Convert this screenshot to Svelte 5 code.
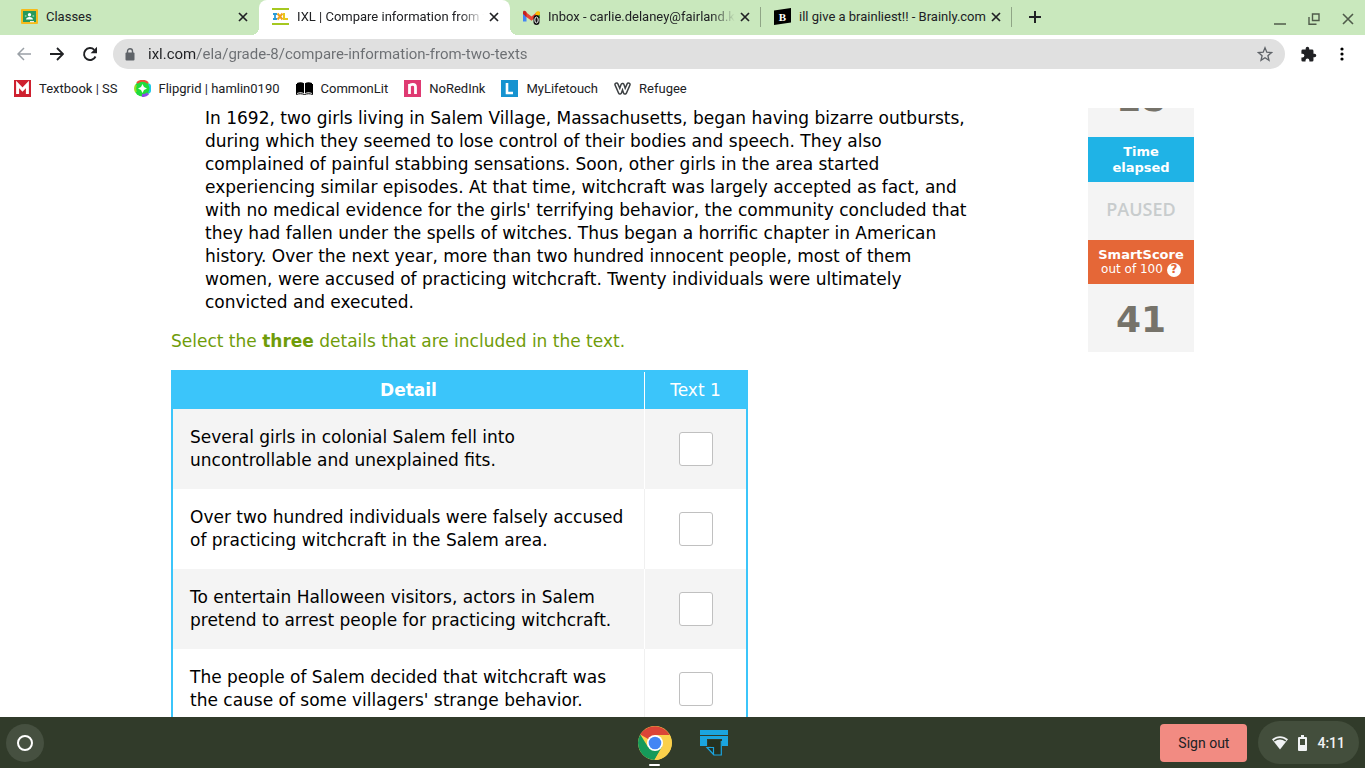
<script lang="ts">
  type Tab = { id: string; title: string; active?: boolean; divider?: boolean; fade?: boolean }

  const tabs: Tab[] = [
    { id: 'classroom', title: 'Classes' },
    { id: 'ixl', title: 'IXL | Compare information from t', active: true, fade: true },
    { id: 'gmail', title: 'Inbox - carlie.delaney@fairland.k', divider: true, fade: true },
    { id: 'brainly', title: 'ill give a brainliest!! - Brainly.com', divider: true }
  ]

  const bookmarks = [
    { id: 'textbook', label: 'Textbook | SS' },
    { id: 'flipgrid', label: 'Flipgrid | hamlin0190' },
    { id: 'commonlit', label: 'CommonLit' },
    { id: 'noredink', label: 'NoRedInk' },
    { id: 'lifetouch', label: 'MyLifetouch' },
    { id: 'refugee', label: 'Refugee' }
  ]

  let url = $state('ixl.com/ela/grade-8/compare-information-from-two-texts')

  let details = $state([
    { text: 'Several girls in colonial Salem fell into uncontrollable and unexplained fits.', checked: false },
    { text: 'Over two hundred individuals were falsely accused of practicing witchcraft in the Salem area.', checked: false },
    { text: 'To entertain Halloween visitors, actors in Salem pretend to arrest people for practicing witchcraft.', checked: false },
    { text: "The people of Salem decided that witchcraft was the cause of some villagers' strange behavior.", checked: false }
  ])
</script>

{#snippet closeIcon()}
  <svg width="10" height="10" viewBox="0 0 10 10"><path d="M1 1l8 8M9 1L1 9" stroke="currentColor" stroke-width="1.7" /></svg>
{/snippet}

{#snippet favicon(id: string)}
  <svg class="favicon" width="17" height="17" viewBox="0 0 17 17" aria-hidden="true">
    {#if id === 'classroom'}
      <rect y="1" width="17" height="15" rx="1" fill="#f6bb1b" />
      <rect x="2" y="3" width="13" height="11" fill="#28995c" />
      <circle cx="8.5" cy="6.7" r="1.7" fill="#fff" />
      <path d="M5 11.5c0-3.4 7-3.4 7 0z" fill="#fff" />
      <circle cx="4.7" cy="8" r="1" fill="#80c9a0" />
      <circle cx="12.3" cy="8" r="1" fill="#80c9a0" />
      <rect x="9" y="13" width="4" height="1.2" fill="#eee" />
    {:else if id === 'ixl'}
      <rect width="17" height="2" fill="#a6c820" />
      <rect y="15" width="17" height="2" fill="#a6c820" />
      <path d="M1 6h4M3 6v5M1 11h4" stroke="#2a9bd8" stroke-width="1.8" />
      <path d="M5.5 5.5l5 6M10.500 5.500l-5 6" stroke="#f2a21c" stroke-width="2" />
      <path d="M12 5v6h4" stroke="#e8c81c" stroke-width="2" fill="none" />
    {:else if id === 'gmail'}
      <path d="M0 3.5v10h3.500V7z" fill="#4285f4" />
      <path d="M12.500 7L17 4v6h-4.500z" fill="#34a853" />
      <path d="M2 3.500l6.500 5 5-4v4.300l-5 4L2 8z" fill="#ea4335" />
      <path d="M12.500 4.800c2-2 4.500-2 4.500.2v1.500l-4.500 3z" fill="#fbbc04" />
      <path d="M0 6V4.500C0 2.500 1.500 2 3.500 4v5z" fill="#c5221f" />
      <rect x="10.500" y="7" width="6" height="10" rx="3" fill="#111" />
      <ellipse cx="13.500" cy="12" rx="1.700" ry="3" fill="none" stroke="#fff" />
    {:else if id === 'brainly'}
      <path d="M0 2.500L17 0v14.500L0 17z" fill="#000" />
      <text x="8.500" y="12.500" text-anchor="middle" class="slab">B</text>
    {:else if id === 'textbook'}
      <rect width="17" height="17" fill="#ce202f" />
      <path d="M3.600 14V4.500L8.500 9.500l4.900-5V14" fill="none" stroke="#fff" stroke-width="3" />
    {:else if id === 'flipgrid'}
      <circle cx="8.500" cy="8.500" r="8" fill="#20dc3b" />
      <path d="M3 3a8 8 0 0 1 11 0" fill="none" stroke="#f05038" stroke-width="2" />
      <path d="M15 4a8 8 0 0 1 0 9" fill="none" stroke="#20c8e8" stroke-width="2" />
      <path d="M8 15.500a8 8 0 0 0 6-2" fill="none" stroke="#8b4be8" stroke-width="3" />
      <path d="M2 12a8 8 0 0 1 0-7" fill="none" stroke="#9ade20" stroke-width="2" />
      <path d="M8.500 4L10 7l3 1.500L10 10l-1.500 3L7 10 4 8.500 7 7z" fill="#fff" />
    {:else if id === 'commonlit'}
      <path d="M1 3c2.500-1 5-1 7 .3v10C6 12 3.500 12 1 13zM16 3c-2.500-1-5-1-7 .3v10c2-1.300 4.500-1.300 7-.3z" fill="#000" />
      <path d="M.5 4v10.500c2.500-1 5-1 8 0 3-1 5.500-1 8 0V4" fill="none" stroke="#000" />
    {:else if id === 'noredink'}
      <rect width="17" height="17" fill="#df3a72" />
      <path d="M5.500 14V4M5.500 6c1-2 6-2.500 6 1v7" fill="none" stroke="#fff" stroke-width="2.800" />
    {:else if id === 'lifetouch'}
      <rect width="17" height="17" fill="#1693d0" />
      <path d="M6 3v10h6" fill="none" stroke="#fff" stroke-width="2.600" />
    {:else if id === 'refugee'}
      <path d="M2.500 4.500L6 12.500 8.500 5 11 12.500 14.500 4.500" fill="none" stroke="#3c4043" stroke-width="4.500" stroke-linejoin="round" stroke-linecap="round" />
      <path d="M2.500 4.500L6 12.500 8.500 5 11 12.500 14.500 4.500" fill="none" stroke="#fff" stroke-width="1.600" stroke-linejoin="round" stroke-linecap="round" />
    {/if}
  </svg>
{/snippet}

<div class="screen">
  <div class="tab-strip">
    {#each tabs as tab (tab.id)}
      <div class="tab" class:active={tab.active} class:divider={tab.divider}>
        {@render favicon(tab.id)}
        <span class="tab-title" class:fade={tab.fade}>{tab.title}</span>
        <button class="tab-close" aria-label="Close tab">{@render closeIcon()}</button>
      </div>
    {/each}
    <button class="new-tab" aria-label="New tab">
      <svg width="14" height="14" viewBox="0 0 14 14"><path d="M7 1v12M1 7h12" stroke="currentColor" stroke-width="2" /></svg>
    </button>
    <div class="window-controls">
      <button aria-label="Minimize"><svg width="12" height="12" viewBox="0 0 12 12"><path d="M0 11h12" stroke="currentColor" stroke-width="1.500" /></svg></button>
      <button aria-label="Restore">
        <svg width="12" height="12" viewBox="0 0 12 12" fill="none" stroke="currentColor" stroke-width="1.400"><path d="M4.500 1h6.500v6.500H4.500zM1 4v7.200h7.500" /></svg>
      </button>
      <button aria-label="Close window"><svg width="12" height="12" viewBox="0 0 12 12"><path d="M1 1l10 10M11 1L1 11" stroke="currentColor" stroke-width="1.600" /></svg></button>
    </div>
  </div>

  <div class="toolbar">
    <button class="nav back" aria-label="Back">
      <svg width="14" height="14" viewBox="0 0 14 14" fill="none" stroke="currentColor" stroke-width="1.500"><path d="M14 7H1.500M7 1L1 7l6 6" /></svg>
    </button>
    <button class="nav" aria-label="Forward">
      <svg width="14" height="14" viewBox="0 0 14 14" fill="none" stroke="currentColor" stroke-width="1.800"><path d="M0 7h12.500M7 1l6 6-6 6" /></svg>
    </button>
    <button class="nav" aria-label="Reload">
      <svg width="16" height="16" viewBox="0 0 16 16"><path d="M13.500 10.500A6 6 0 1 1 12.300 3.800" fill="none" stroke="currentColor" stroke-width="1.900" /><path d="M15 .8v6.400H8.600z" fill="currentColor" /></svg>
    </button>
    <div class="omnibox">
      <svg width="10" height="13" viewBox="0 0 10 13"><path d="M2.500 5V3.200a2.500 2.500 0 0 1 5 0V5" fill="none" stroke="#5f6368" stroke-width="1.400" /><rect x=".5" y="4.500" width="9" height="8" rx="1" fill="#5f6368" /></svg>
      <input class="url" type="text" aria-label="Address" bind:value={url} />
      <button class="star" aria-label="Bookmark this page">
        <svg width="16" height="16" viewBox="0 0 16 16"><path d="M8 1.800l1.800 4.400 4.700.4-3.600 3.100 1.100 4.600L8 11.800l-4 2.500 1.100-4.600-3.600-3.100 4.700-.4z" fill="none" stroke="currentColor" stroke-width="1.300" /></svg>
      </button>
    </div>
    <button class="nav" aria-label="Extensions">
      <svg width="17" height="17" viewBox="0 0 24 24"><path d="M20.500 11H19V7a2 2 0 0 0-2-2h-4V3.500a2.500 2.500 0 0 0-5 0V5H4a2 2 0 0 0-2 2v3.800h1.500a2.700 2.700 0 0 1 0 5.400H2V20a2 2 0 0 0 2 2h3.800v-1.500a2.700 2.700 0 0 1 5.400 0V22H17a2 2 0 0 0 2-2v-4h1.500a2.500 2.500 0 0 0 0-5z" fill="currentColor" /></svg>
    </button>
    <button class="nav" aria-label="Menu">
      <svg width="4" height="14" viewBox="0 0 4 14"><circle cx="2" cy="2" r="1.600" /><circle cx="2" cy="7" r="1.600" /><circle cx="2" cy="12" r="1.600" /></svg>
    </button>
  </div>

  <nav class="bookmarks">
    {#each bookmarks as mark (mark.id)}
      <a href="#{mark.id}">{@render favicon(mark.id)}{mark.label}</a>
    {/each}
  </nav>

  <main class="viewport">
    <div class="page">
      <section class="question">
        <p class="passage">
          In 1692, two girls living in Salem Village, Massachusetts, began having bizarre outbursts,
          during which they seemed to lose control of their bodies and speech. They also
          complained of painful stabbing sensations. Soon, other girls in the area started
          experiencing similar episodes. At that time, witchcraft was largely accepted as fact, and
          with no medical evidence for the girls' terrifying behavior, the community concluded that
          they had fallen under the spells of witches. Thus began a horrific chapter in American
          history. Over the next year, more than two hundred innocent people, most of them
          women, were accused of practicing witchcraft. Twenty individuals were ultimately
          convicted and executed.
        </p>
        <p class="prompt">Select the <strong>three</strong> details that are included in the text.</p>

        <table class="details">
          <thead>
            <tr>
              <th class="detail-col">Detail</th>
              <th class="text-col">Text 1</th>
            </tr>
          </thead>
          <tbody>
            {#each details as detail, i}
              <tr>
                <td><label for="detail-{i}">{detail.text}</label></td>
                <td class="check"><input id="detail-{i}" type="checkbox" bind:checked={detail.checked} /></td>
              </tr>
            {/each}
          </tbody>
        </table>
      </section>

      <aside class="stats">
        <div class="answered">18</div>
        <div class="stat-head time">Time<br />elapsed</div>
        <div class="paused">PAUSED</div>
        <div class="stat-head smart">
          SmartScore
          <span class="out-of">out of 100 <button class="help" aria-label="About SmartScore">?</button></span>
        </div>
        <div class="score">41</div>
      </aside>
    </div>
  </main>

  <footer class="shelf">
    <button class="launcher" aria-label="Launcher"><span class="ring"></span></button>
    <div class="apps">
      <button class="app running" aria-label="Chrome">
        <svg width="34" height="34" viewBox="0 0 34 34">
          <circle cx="17" cy="17" r="17" fill="#fbd04b" />
          <path d="M17 17L2.300 8.500A17 17 0 0 1 31.700 9H17z" fill="#db4437" />
          <path d="M2.300 8.500A17 17 0 0 0 16.500 34L24 21 17 17 10 21z" fill="#169a5a" />
          <path d="M17 9h14.700A17 17 0 0 1 16.500 34L24 21z" fill="#fbd04b" />
          <circle cx="17" cy="17" r="8" fill="#fff" />
          <circle cx="17" cy="17" r="6.300" fill="#4285f4" />
        </svg>
      </button>
      <button class="app" aria-label="Print">
        <svg width="28" height="26" viewBox="0 0 28 26">
          <path d="M0 0h28v5H0z" fill="#1ba5e0" />
          <path d="M0 6h28v10h-6V9H7v7H0z" fill="#1ba5e0" />
          <path d="M8 10h13v15h-7l-7-7h4V16H8z" fill="#26311f" />
          <path d="M21.300 11v14H14l-7-7.500h6.500V25M7 17.500L14 25" fill="none" stroke="#1ba5e0" stroke-width="1.200" />
        </svg>
      </button>
    </div>
    <div class="tray">
      <button class="sign-out">Sign out</button>
      <button class="status">
        <svg width="16" height="14" viewBox="0 0 16 14"><path d="M0 3.200C5-.8 11-.8 16 3.200L8 13.500z" fill="#f1f3f4" /><path d="M2.200 4.800c3.500-2.400 8.100-2.400 11.600 0" fill="none" stroke="#434e3c" stroke-width="1.500" /></svg>
        <svg width="9" height="16" viewBox="0 0 9 16"><path d="M3 0h3v2h2a1 1 0 0 1 1 1v12a1 1 0 0 1-1 1H1a1 1 0 0 1-1-1V3a1 1 0 0 1 1-1h2z" fill="#f1f3f4" /><path d="M2 4h5v6H2z" fill="#434e3c" /></svg>
        <span>4:11</span>
      </button>
    </div>
  </footer>
</div>

<style>
  :global(body) {
    background: #fff;
    overflow: hidden;
  }

  button {
    display: flex;
    align-items: center;
    justify-content: center;
    margin: 0;
    padding: 0;
    border: 0;
    background: none;
    color: inherit;
    font: inherit;
    cursor: pointer;
  }

  svg {
    display: block;
    flex: none;
  }

  .screen {
    display: flex;
    flex-direction: column;
    height: 100vh;
    font-family: Roboto, sans-serif;
    font-size: 13px;
    color: #202124;
  }

  /* browser chrome */
  .tab-strip {
    display: flex;
    flex: none;
    height: 35px;
    padding-left: 8px;
    background: #c9e8bd;
  }

  .tab {
    display: flex;
    flex: 0 1 251px;
    align-items: center;
    min-width: 0;
    box-sizing: border-box;
    padding: 0 10px 2px 13px;
    position: relative;
  }

  .tab.active {
    background: #fff;
    border-radius: 8px 8px 0 0;
  }

  .tab.active::before,
  .tab.active::after {
    content: '';
    position: absolute;
    bottom: 0;
    width: 8px;
    height: 8px;
  }

  .tab.active::before {
    left: -8px;
    background: radial-gradient(circle at 0 0, transparent 8px, #fff 8px);
  }

  .tab.active::after {
    right: -8px;
    background: radial-gradient(circle at 100% 0, transparent 8px, #fff 8px);
  }

  .tab.divider::after {
    content: '';
    position: absolute;
    right: 0;
    top: 7px;
    width: 1px;
    height: 20px;
    background: #8fa586;
  }

  .tab-title {
    flex: 1;
    min-width: 0;
    margin-left: 8px;
    overflow: hidden;
    white-space: nowrap;
  }

  .tab-title.fade {
    mask-image: linear-gradient(to right, #000 calc(100% - 28px), transparent calc(100% - 4px));
  }

  .tab-close {
    width: 12px;
    height: 20px;
  }

  .new-tab {
    width: 28px;
    margin: 0 0 2px 9px;
  }

  .window-controls {
    display: flex;
    gap: 22px;
    margin-left: auto;
    padding: 2px 11px 0 0;
    color: #4f5b4a;
  }

  .toolbar {
    display: flex;
    flex: none;
    align-items: center;
    gap: 6px;
    height: 38px;
    padding: 0 10px;
  }

  .nav {
    width: 27px;
    height: 28px;
  }

  .back {
    color: #9aa0a6;
  }

  .omnibox {
    display: flex;
    flex: 1;
    align-items: center;
    gap: 13px;
    height: 30px;
    box-sizing: border-box;
    margin: 0 4px;
    padding: 0 12px;
    border-radius: 15px;
    background: #e0e0e0;
  }

  .url {
    flex: 1;
    min-width: 0;
    padding: 0;
    border: 0;
    outline: 0;
    font: 15px Roboto, sans-serif;
    color: #5f6368;
    background: linear-gradient(to right, #202124 49px, #6b6e72 49px) text;
    -webkit-text-fill-color: transparent;
  }

  .star {
    color: #5f6368;
  }

  .bookmarks {
    display: flex;
    flex: none;
    align-items: center;
    gap: 16px;
    height: 31px;
    padding: 0 14px 4px;
  }

  .bookmarks a {
    display: flex;
    align-items: center;
    gap: 8px;
    color: inherit;
    text-decoration: none;
    white-space: nowrap;
  }

  .slab {
    font: bold 11px 'Liberation Serif', serif;
    fill: #fff;
  }

  /* lesson page */
  .viewport {
    flex: 1;
    min-height: 0;
    overflow: hidden;
    font-family: 'DejaVu Sans', Verdana, sans-serif;
    font-size: 17px;
    line-height: 23px;
    color: #000;
  }

  .page {
    display: flex;
    align-items: flex-start;
    justify-content: space-between;
    max-width: 1023px;
    margin: 0 auto;
  }

  .question {
    max-width: 802px;
  }

  .passage {
    margin: -1px 0 0;
    padding-left: 34px;
  }

  .prompt {
    margin: 16px 0 17px;
    color: #6f9c0a;
  }

  .details {
    width: 577px;
    border: 2px solid #3bc5fa;
    border-spacing: 0;
    border-collapse: separate;
  }

  th {
    height: 37px;
    padding: 0;
    background: #3bc5fa;
    color: #fff;
  }

  .text-col {
    width: 101px;
    border-left: 1px solid #fff;
    font-weight: normal;
  }

  td {
    height: 80px;
    box-sizing: border-box;
    padding: 0 17px;
  }

  tbody tr:nth-child(odd) {
    background: #f4f4f4;
  }

  .check {
    padding: 0;
    border-left: 1px solid #f0f0f0;
  }

  tbody tr:nth-child(odd) .check {
    border-left-color: #fff;
  }

  .check input {
    display: block;
    appearance: none;
    width: 34px;
    height: 34px;
    margin: 0 auto;
    border: 1px solid #c0c0c0;
    border-radius: 3px;
    background: #fff;
  }

  .check input:checked {
    background: #3bc5fa;
  }

  .stats {
    width: 106px;
    background: #f4f4f4;
    text-align: center;
  }

  .answered,
  .score {
    font-size: 36px;
    font-weight: bold;
    color: #76736a;
  }

  .answered {
    display: flex;
    align-items: flex-end;
    justify-content: center;
    height: 29px;
    line-height: 76px;
  }

  .stat-head {
    display: flex;
    flex-direction: column;
    justify-content: center;
    font-size: 13px;
    font-weight: bold;
    line-height: 16px;
    color: #fff;
  }

  .time {
    height: 45px;
    background: #1fb3e6;
  }

  .smart {
    height: 44px;
    line-height: 15px;
    background: #e56737;
  }

  .out-of {
    display: flex;
    align-items: center;
    justify-content: center;
    gap: 4px;
    font-size: 12px;
    font-weight: normal;
  }

  .help {
    width: 14px;
    height: 14px;
    border-radius: 50%;
    background: #fff;
    color: #e56737;
    font-size: 12px;
    font-weight: bold;
  }

  .paused {
    padding-bottom: 4px;
    font-family: 'Open Sans', sans-serif;
    font-size: 18px;
    font-weight: 600;
    line-height: 54px;
    color: #c8cccd;
  }

  .score {
    padding-top: 4px;
    line-height: 64px;
  }

  /* ChromeOS shelf */
  .shelf {
    display: grid;
    grid-template-columns: 1fr auto 1fr;
    flex: none;
    align-items: center;
    height: 51px;
    padding: 0 6px;
    background: #313b2a;
  }

  .launcher {
    width: 38px;
    height: 38px;
    border-radius: 50%;
    background: #465040;
  }

  .ring {
    width: 12px;
    height: 12px;
    border: 2px solid #fff;
    border-radius: 50%;
  }

  .apps {
    display: flex;
    gap: 28px;
  }

  .app {
    position: relative;
  }

  .running::after {
    content: '';
    position: absolute;
    bottom: -6px;
    width: 11px;
    height: 2px;
    border-radius: 1px;
    background: #fff;
  }

  .tray {
    display: flex;
    align-items: center;
    justify-content: flex-end;
    gap: 11px;
  }

  .sign-out {
    height: 38px;
    padding: 0 18px;
    border-radius: 4px;
    background: #f28b82;
    font-size: 14px;
  }

  .status {
    gap: 10px;
    height: 43px;
    padding: 0 14px;
    border-radius: 22px;
    background: #434e3c;
    color: #f1f3f4;
    font-size: 14px;
    font-weight: 500;
  }
</style>
